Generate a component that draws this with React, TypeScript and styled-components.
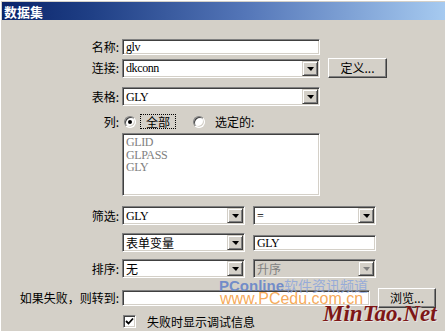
import React from "react";
import styled, { createGlobalStyle, css } from "styled-components";

const cjk = `"Noto Sans CJK SC", "Liberation Sans", sans-serif`;
const serif = `"Liberation Serif", "Noto Sans CJK SC", serif`;

const Global = createGlobalStyle`
  html, body { margin: 0; padding: 0; background: #d4d0c8; }
  body { font-family: ${cjk}; font-size: 12px; color: #000; }
`;

const sunken = css`
  box-sizing: border-box;
  border: 1px solid;
  border-color: #808080 #ffffff #ffffff #808080;
  box-shadow: inset 1px 1px #404040, inset -1px -1px #d4d0c8;
`;

const raised = css`
  box-sizing: border-box;
  border: 1px solid;
  border-color: #ffffff #404040 #404040 #ffffff;
  box-shadow: inset -1px -1px #808080;
  background: #d4d0c8;
`;

const Window = styled.div`
  position: relative;
  width: 445px;
  height: 331px;
  box-sizing: border-box;
  background: #d4d0c8;
  border-top: 1px solid #ffffff;
  border-left: 1px solid #ffffff;
  padding: 1px 0 0 1px;
  overflow: hidden;
`;

const TitleBar = styled.div`
  height: 18px;
  background: linear-gradient(to right, #0a246a 0%, #1f3f85 20%, #5476b8 55%, #a6caf0 100%);
  display: flex;
  align-items: center;
  padding-left: 2px;
  color: #ffffff;
  font-family: ${cjk};
  font-weight: bold;
  font-size: 13px;
`;

const Form = styled.div`
  display: flex;
  flex-direction: column;
`;

const Row = styled.div<{ $mt: number; $h: number }>`
  display: flex;
  align-items: center;
  margin-top: ${(p) => p.$mt}px;
  height: ${(p) => p.$h}px;
  line-height: 14px;
`;

const Label = styled.div`
  width: 120px;
  box-sizing: border-box;
  padding-right: 3px;
  text-align: right;
  white-space: nowrap;
  font-size: 12px;
`;

const Controls = styled.div<{ $pl?: number; $gap?: number }>`
  display: flex;
  align-items: center;
  gap: ${(p) => p.$gap ?? 8}px;
  padding-left: ${(p) => p.$pl ?? 0}px;
  height: 100%;
`;

const TextBox = styled.div<{ $w: number; $h?: number }>`
  ${sunken};
  width: ${(p) => p.$w}px;
  height: ${(p) => p.$h ?? 16}px;
  background: #ffffff;
  padding: 0 3px;
  display: flex;
  align-items: center;
  overflow: hidden;
`;

const Value = styled.span<{ $cjk?: boolean; $disabled?: boolean }>`
  font-family: ${(p) => (p.$cjk ? cjk : serif)};
  font-size: 12px;
  letter-spacing: ${(p) => (p.$cjk ? "0px" : "-0.4px")};
  color: ${(p) => (p.$disabled ? "#808080" : "#000000")};
  white-space: nowrap;
`;

const SelectBox = styled.div<{ $w: number; $disabled?: boolean }>`
  ${sunken};
  width: ${(p) => p.$w}px;
  height: 19px;
  padding: 1px;
  display: flex;
  align-items: stretch;
  background: ${(p) => (p.$disabled ? "#d4d0c8" : "#ffffff")};
`;

const SelectValue = styled.div`
  flex: 1;
  display: flex;
  align-items: center;
  padding-left: 2px;
  overflow: hidden;
`;

const DropBtn = styled.div`
  ${raised};
  border-color: #d4d0c8 #404040 #404040 #d4d0c8;
  box-shadow: inset 1px 1px #ffffff, inset -1px -1px #808080;
  width: 16px;
  display: flex;
  align-items: center;
  justify-content: center;
`;

const Arrow = styled.span<{ $disabled?: boolean }>`
  width: 0;
  height: 0;
  border-left: 4px solid transparent;
  border-right: 3px solid transparent;
  border-top: 4px solid ${(p) => (p.$disabled ? "#808080" : "#000000")};
  margin-top: 1px;
`;

const Button = styled.div<{ $w: number }>`
  ${raised};
  width: ${(p) => p.$w}px;
  height: 20px;
  display: flex;
  align-items: center;
  justify-content: center;
  font-family: ${cjk};
  font-size: 12px;
  padding-bottom: 1px;
`;

const RadioGroup = styled.div`
  display: flex;
  align-items: center;
  gap: 17px;
  padding-left: 2px;
`;

const RadioOption = styled.div`
  display: flex;
  align-items: center;
  gap: 4px;
`;

const Radio = styled.span<{ $checked?: boolean }>`
  ${sunken};
  position: relative;
  width: 12px;
  height: 12px;
  border-radius: 50%;
  background: #ffffff;
  &::after {
    content: "";
    display: ${(p) => (p.$checked ? "block" : "none")};
    position: absolute;
    left: 3px;
    top: 3px;
    width: 4px;
    height: 4px;
    border-radius: 50%;
    background: #000000;
  }
`;

const Caption = styled.span<{ $focused?: boolean }>`
  border: 1px dotted ${(p) => (p.$focused ? "#000000" : "transparent")};
  padding: 0 5px;
  line-height: 13px;
  font-size: 12px;
`;

const ListBox = styled.div`
  ${sunken};
  width: 198px;
  height: 63px;
  background: #ffffff;
  padding: 2px 3px;
  display: flex;
  flex-direction: column;
`;

const ListItem = styled.div`
  font-family: ${serif};
  font-size: 12px;
  letter-spacing: -0.4px;
  line-height: 12.5px;
  color: #808080;
`;

const CheckBox = styled.span`
  ${sunken};
  width: 13px;
  height: 13px;
  background: #ffffff;
  display: flex;
  align-items: center;
  justify-content: center;
`;

const CheckText = styled.span`
  font-size: 12px;
`;

const Watermark = styled.div<{ $x: number; $y: number }>`
  position: absolute;
  left: ${(p) => p.$x}px;
  top: ${(p) => p.$y}px;
  white-space: nowrap;
  pointer-events: none;
  line-height: 1;
`;

const PcOnline = styled.span`
  font-family: "Liberation Sans", Arial, sans-serif;
  font-weight: bold;
  font-size: 15px;
  color: rgba(96, 128, 200, 0.85);
`;

const PcChinese = styled.span`
  font-family: ${cjk};
  font-size: 14px;
  color: rgba(140, 165, 220, 0.85);
`;

const PcEdu = styled.span`
  font-family: "Liberation Sans", Arial, sans-serif;
  font-size: 16px;
  color: rgba(245, 160, 70, 0.9);
`;

const MinTao = styled.span`
  font-family: "Liberation Serif", "Times New Roman", serif;
  font-style: italic;
  font-weight: bold;
  font-size: 23px;
  color: #7e1616;
  text-shadow: 1px 1px 0 rgba(255, 255, 255, 0.5);
`;

function Select({ w, value, cjkText, disabled }: { w: number; value: string; cjkText?: boolean; disabled?: boolean }) {
  return (
    <SelectBox $w={w} $disabled={disabled}>
      <SelectValue>
        <Value $cjk={cjkText} $disabled={disabled}>{value}</Value>
      </SelectValue>
      <DropBtn>
        <Arrow $disabled={disabled} />
      </DropBtn>
    </SelectBox>
  );
}

export default function App() {
  return (
    <>
      <Global />
      <Window>
        <TitleBar>数据集</TitleBar>
        <Form>
          <Row $mt={19} $h={16}>
            <Label>名称:</Label>
            <Controls>
              <TextBox $w={198} $h={16}>
                <Value>glv</Value>
              </TextBox>
            </Controls>
          </Row>
          <Row $mt={3} $h={20}>
            <Label>连接:</Label>
            <Controls>
              <Select w={198} value="dkconn" />
              <Button $w={59}>定义...</Button>
            </Controls>
          </Row>
          <Row $mt={9} $h={19}>
            <Label>表格:</Label>
            <Controls>
              <Select w={198} value="GLY" />
            </Controls>
          </Row>
          <Row $mt={8} $h={15}>
            <Label>列:</Label>
            <RadioGroup>
              <RadioOption>
                <Radio $checked />
                <Caption $focused>全部</Caption>
              </RadioOption>
              <RadioOption>
                <Radio />
                <Caption>选定的:</Caption>
              </RadioOption>
            </RadioGroup>
          </Row>
          <Row $mt={4} $h={63}>
            <Label />
            <ListBox>
              <ListItem>GLID</ListItem>
              <ListItem>GLPASS</ListItem>
              <ListItem>GLY</ListItem>
            </ListBox>
          </Row>
          <Row $mt={10} $h={19}>
            <Label>筛选:</Label>
            <Controls>
              <Select w={123} value="GLY" />
              <Select w={123} value="=" />
            </Controls>
          </Row>
          <Row $mt={8} $h={19}>
            <Label />
            <Controls>
              <Select w={123} value="表单变量" cjkText />
              <TextBox $w={123} $h={16}>
                <Value>GLY</Value>
              </TextBox>
            </Controls>
          </Row>
          <Row $mt={7} $h={19}>
            <Label>排序:</Label>
            <Controls>
              <Select w={123} value="无" cjkText />
              <Select w={123} value="升序" cjkText disabled />
            </Controls>
          </Row>
          <Row $mt={10} $h={20}>
            <Label>如果失败，则转到:</Label>
            <Controls>
              <TextBox $w={248} $h={16} />
              <Button $w={58}>浏览...</Button>
            </Controls>
          </Row>
          <Row $mt={7} $h={13}>
            <Label />
            <Controls $pl={1} $gap={11}>
              <CheckBox>
                <svg width="9" height="9" viewBox="0 0 9 9">
                  <polyline points="1,4 3.5,6.5 8,1.5" fill="none" stroke="#000" strokeWidth="1.8" />
                </svg>
              </CheckBox>
              <CheckText>失败时显示调试信息</CheckText>
            </Controls>
          </Row>
        </Form>
        <Watermark $x={218} $y={277}>
          <PcOnline>PConline</PcOnline>
          <PcChinese>软件资讯频道</PcChinese>
        </Watermark>
        <Watermark $x={219} $y={290}>
          <PcEdu>www.PCedu.com.cn</PcEdu>
        </Watermark>
        <Watermark $x={322} $y={301}>
          <MinTao>MinTao.Net</MinTao>
        </Watermark>
      </Window>
    </>
  );
}
